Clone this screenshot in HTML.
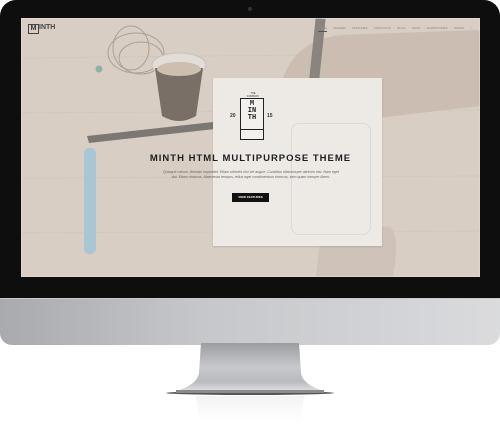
<!DOCTYPE html>
<html><head><meta charset="utf-8">
<style>
html,body{margin:0;padding:0;background:#fff;width:500px;height:432px;overflow:hidden;font-family:"Liberation Sans",sans-serif}
.abs{position:absolute}
</style></head>
<body>
<div class="abs" style="left:0;top:0;width:500px;height:432px">
 <div class="abs" style="left:0;top:0;width:500px;height:300px;background:#0e0e0e;border-radius:16px 16px 0 0"></div>
 <div class="abs" style="left:248px;top:7px;width:4px;height:4px;border-radius:50%;background:#333"></div>
 <div class="abs" style="left:0;top:298px;width:500px;height:46px;border-radius:0 0 12px 12px;background:linear-gradient(90deg,#a9aaae 0%,#c6c7ca 40%,#d3d4d7 80%,#dadbdd 100%);border-top:1px solid #c9c9cc"></div>
 <svg class="abs" style="left:0;top:343px" width="500" height="89">
  <defs>
   <linearGradient id="st" x1="0" y1="0" x2="0" y2="1">
    <stop offset="0" stop-color="#9c9da1"/><stop offset="0.5" stop-color="#c8c9cc"/><stop offset="0.8" stop-color="#b9babd"/><stop offset="1" stop-color="#dedfe1"/>
   </linearGradient>
   <linearGradient id="rf" x1="0" y1="0" x2="0" y2="1">
    <stop offset="0" stop-color="#ececee"/><stop offset="1" stop-color="#fff"/>
   </linearGradient>
  </defs>
  <path d="M201 0 L299 0 L301 30 Q303 42 324 48 L176 48 Q197 42 199 30 Z" fill="url(#st)"/>
  <ellipse cx="250" cy="50" rx="84" ry="2" fill="#555"/>
  <rect x="176" y="47" width="148" height="3" fill="#8a8b8e"/>
  <path d="M196 53 L304 53 L300 80 L200 80 Z" fill="url(#rf)" opacity="0.6"/>
 </svg>
 <div class="abs" style="left:21px;top:18px;width:459px;height:259px;overflow:hidden;background:#d9cec3">
  <svg class="abs" style="left:0;top:0" width="459" height="259">
   <g stroke="#d0c4b8" stroke-width="1" opacity="0.6">
    <line x1="0" y1="40" x2="459" y2="35"/><line x1="0" y1="95" x2="459" y2="92"/>
    <line x1="0" y1="160" x2="459" y2="158"/><line x1="0" y1="215" x2="459" y2="213"/>
   </g>
   <g fill="none" stroke="#a8a099" stroke-width="1">
    <ellipse cx="115" cy="35" rx="28" ry="20"/><ellipse cx="120" cy="40" rx="22" ry="16"/><ellipse cx="110" cy="30" rx="18" ry="22"/>
   </g>
   <circle cx="78" cy="51" r="3.5" fill="#8fb0a9"/>
   <ellipse cx="158" cy="47" rx="27" ry="12" fill="#e3ddd7" stroke="#c9c1ba"/>
   <path d="M134 50 L141 98 Q158 108 175 98 L182 50 Z" fill="#7a6f66"/>
   <ellipse cx="158" cy="51" rx="22" ry="7" fill="#cdbfb0"/>
   <path d="M66 118 L192 104 L194 111 L68 125 Z" fill="#7b7773"/>
   <rect x="63" y="130" width="12" height="106" rx="5" fill="#a9c6d4"/>
   <path d="M262 60 Q275 22 320 17 L459 12 L459 88 L390 96 Q340 102 300 108 Q272 98 262 60 Z" fill="#cbbdb2"/>
   <rect x="291" y="0" width="10" height="70" fill="#8a847f" transform="rotate(6 296 35)"/>
   <path d="M295 259 L300 215 Q320 205 340 212 L368 208 Q380 215 372 259 Z" fill="#cfc2b8"/>
   <circle cx="305" cy="217" r="3.5" fill="#6a625e"/><circle cx="327" cy="214" r="4" fill="#6a625e"/><circle cx="350" cy="210" r="3.5" fill="#6a625e"/>
  </svg>
  <div class="abs" style="left:192px;top:60px;width:169px;height:168px;background:#edeae6;box-shadow:0 1px 2px rgba(0,0,0,.12)"></div>
  <div class="abs" style="left:270px;top:105px;width:78px;height:110px;border:1px solid #dcd8d4;border-radius:8px"></div>
  <div class="abs" style="left:7px;top:6px;width:9px;height:8px;border:1px solid #444;font-size:7px;line-height:8px;text-align:center;color:#333;font-weight:bold">M</div>
  <div class="abs" style="left:18px;top:6px;font-size:7px;color:#444;font-weight:bold">INTH</div>
  <div class="abs" style="left:297px;top:8px;width:154px;display:flex;justify-content:space-between;font-size:3px;color:#888;white-space:nowrap">
   <span>HOME</span><span>HEADER</span><span>FEATURES</span><span>PORTFOLIO</span><span>BLOG</span><span>SHOP</span><span>SHORTCODES</span><span>PAGES</span><span>○</span>
  </div>
  <div class="abs" style="left:297px;top:13px;width:9px;height:1px;background:#555"></div>
  <div class="abs" style="left:220px;top:74px;width:24px;text-align:center;font-size:2.5px;color:#333">THE<br>COMPANY</div>
  <div class="abs" style="left:219px;top:80px;width:22px;height:40px;border:1px solid #222;background:#f3f1ee"></div>
  <div class="abs" style="left:219px;top:83px;width:24px;text-align:center;font-size:7px;line-height:7px;font-weight:bold;color:#222;font-family:'Liberation Mono',monospace">M<br>IN<br>TH</div>
  <div class="abs" style="left:220px;top:111px;width:22px;height:1px;background:#222"></div>
  <div class="abs" style="left:209px;top:95px;font-size:5px;font-weight:bold;color:#333">20</div>
  <div class="abs" style="left:246px;top:95px;font-size:5px;font-weight:bold;color:#333">15</div>
  <div class="abs" style="left:0;width:459px;top:135px;text-align:center;font-size:9.5px;font-weight:bold;letter-spacing:1px;color:#1e1e1e">MINTH HTML MULTIPURPOSE THEME</div>
  <div class="abs" style="left:142px;width:176px;top:152px;text-align:center;font-size:3.6px;line-height:5px;font-style:italic;color:#666">Quisque rutrum. Aenean imperdiet. Etiam ultricies nisi vel augue. Curabitur ullamcorper ultricies nisi. Nam eget dui. Etiam rhoncus. Maecenas tempus, tellus eget condimentum rhoncus, sem quam semper libero.</div>
  <div class="abs" style="left:211px;top:175px;width:37px;height:9px;background:#111;color:#fff;font-size:3px;line-height:9px;text-align:center;font-weight:bold">VIEW FEATURES</div>
  <div class="abs" style="left:0;top:0;width:457px;height:257px;border:1px solid rgba(230,220,210,.6)"></div>
 </div>
</div>
</body></html>
